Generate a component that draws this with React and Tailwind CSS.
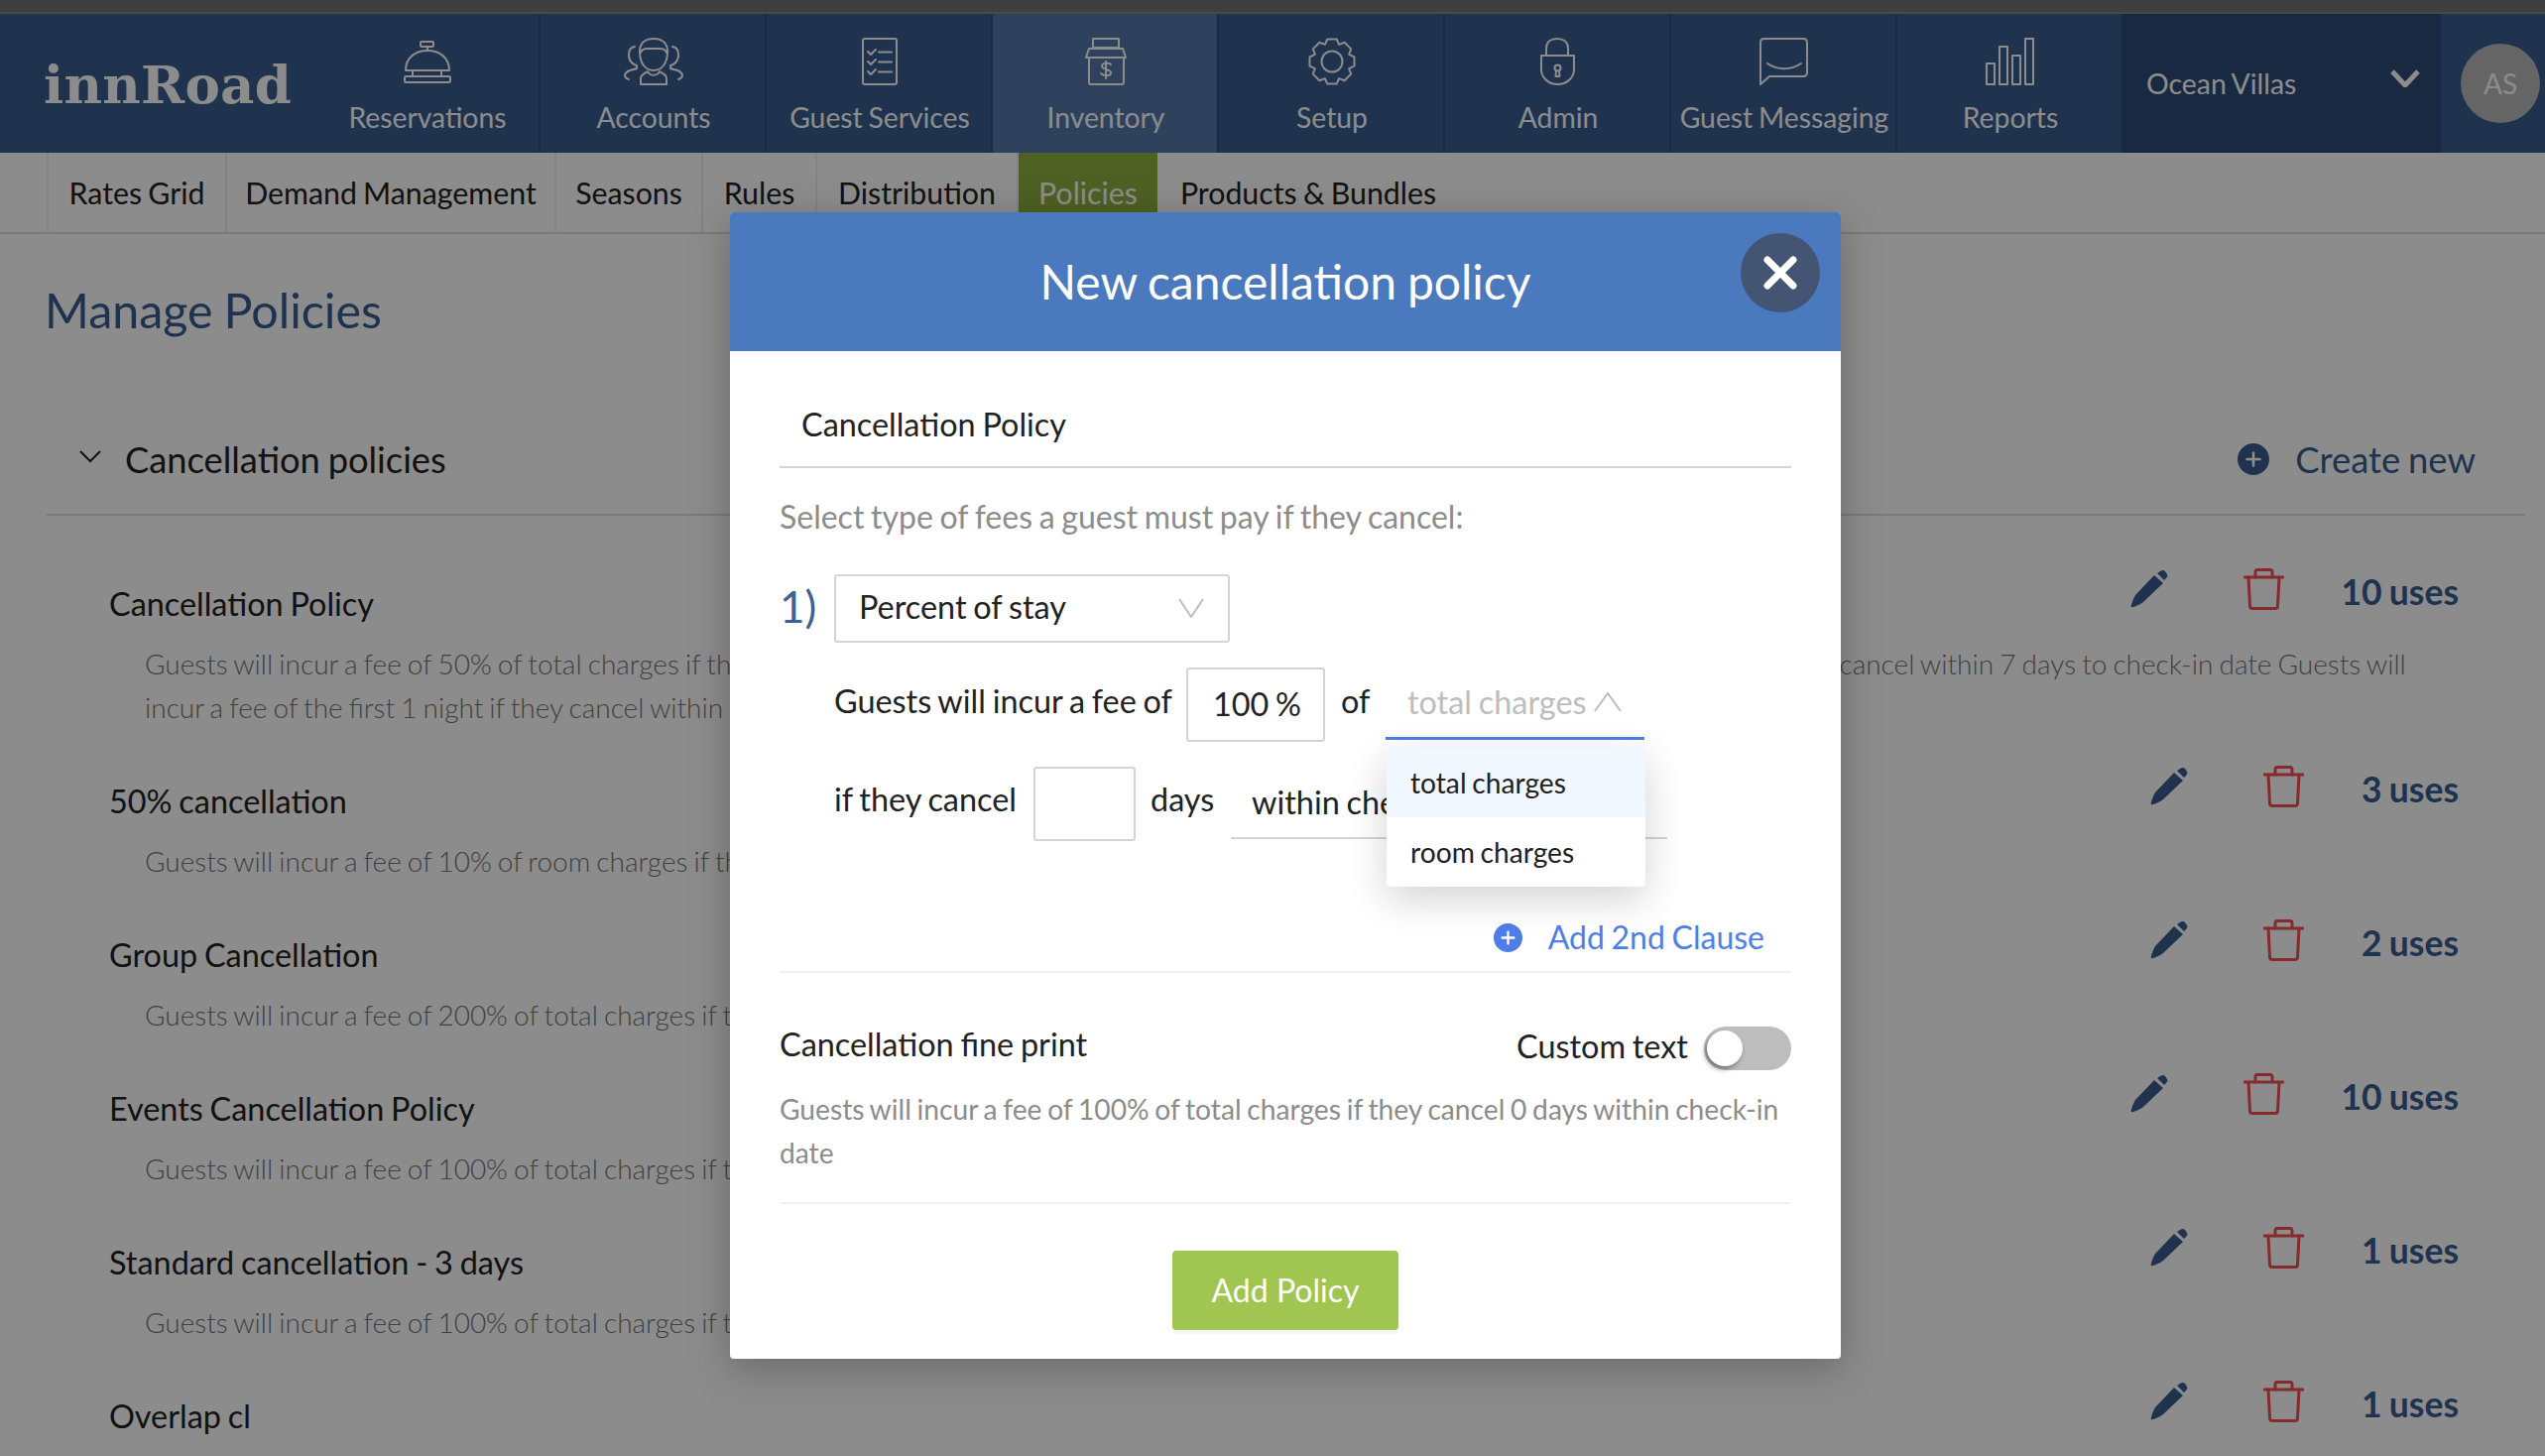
const navStroke = { fill: 'none', stroke: 'currentColor', strokeWidth: 2, strokeLinejoin: 'round', strokeLinecap: 'round' }

function gearPath() {
  const pts = []
  for (let i = 0; i < 8; i++) {
    const a = (i * Math.PI) / 4 - Math.PI / 2
    const step = Math.PI / 4
    const list = [[18.5, -0.5], [23, -0.26], [23, 0.26], [18.5, 0.5]]
    list.forEach(([r, k]) => {
      const t = a + k * step
      pts.push(`${(24 + r * Math.cos(t)).toFixed(1)} ${(24 + r * Math.sin(t)).toFixed(1)}`)
    })
  }
  return 'M' + pts.join(' L') + ' Z'
}

const BellIcon = () => (
  <svg width="48" height="48" viewBox="0 0 48 48" {...navStroke}>
    <rect x="17" y="4" width="13" height="5" rx="1" />
    <path d="M24 9V13" />
    <path d="M2 33C2 20 12 13 24 13C36 13 46 20 46 33Z" />
    <path d="M9 33V39M38 33V39" />
    <rect x="1" y="39" width="46" height="6" rx="1.5" />
  </svg>
)

const PeopleIcon = () => (
  <svg width="60" height="48" viewBox="0 0 60 48" {...navStroke}>
    <path d="M16 14C16 5 22 1 30 1C38 1 44 5 44 14C44 26 38 33 30 33C22 33 16 26 16 14Z" />
    <path d="M17 15C19 10 24 11 30 11C36 11 41 10 43 15" />
    <path d="M17 47V41C17 37 21 36 24 34C26 39 34 39 36 34C39 36 43 37 43 41V47Z" />
    <path d="M11 9C5 10 5 15 5 19C6 24 9 27 13 28V31C9 33 2 32 1 38C1 40 2 41 5 42" />
    <path d="M49 9C55 10 55 15 55 19C54 24 51 27 47 28V31C51 33 58 32 59 38C59 40 58 41 55 42" />
  </svg>
)

const ChecklistIcon = () => (
  <svg width="36" height="48" viewBox="0 0 36 48" {...navStroke}>
    <rect x="1" y="1" width="34" height="46" rx="2" />
    <path d="M6 14L9 17L14 12M6 24L9 27L14 22M6 34L9 37L14 32" />
    <path d="M17 14.5H30M17 24.5H30M17 34.5H30" />
  </svg>
)

const JarIcon = () => (
  <svg width="42" height="48" viewBox="0 0 42 48" {...navStroke}>
    <rect x="8" y="1" width="26" height="9" />
    <path d="M4 11H38L41 20H1Z" />
    <path d="M4 20V45Q4 47 6 47H37Q39 47 39 45V20" />
    <path d="M26 27C24 25 18 25 17 28C16 33 27 31 26 36C25 39 19 39 16 36M21 24V41" />
  </svg>
)

const GearIcon = () => (
  <svg width="48" height="48" viewBox="0 0 48 48" {...navStroke}>
    <path d={gearPath()} />
    <circle cx="24" cy="24" r="10.5" />
  </svg>
)

const LockIcon = () => (
  <svg width="36" height="48" viewBox="0 0 36 48" {...navStroke}>
    <path d="M1 18H34V32C34 41 26 47 17.5 47C9 47 1 41 1 32Z" />
    <path d="M6 18V11C6 4 11 1 17 1C23 1 28 4 28 11V18" />
    <circle cx="17.5" cy="30.5" r="3" />
    <path d="M16 33.5L15.5 39H19.5L19 33.5" />
  </svg>
)

const BubbleIcon = () => (
  <svg width="50" height="48" viewBox="0 0 50 48" {...navStroke}>
    <path d="M1 47V5Q1 1 5 1H44Q48 1 48 5V35Q48 39 44 39H10Z" />
    <path d="M8 26C18 33 32 33 42 26" />
  </svg>
)

const BarsIcon = () => (
  <svg width="50" height="48" viewBox="0 0 50 48" {...navStroke}>
    <rect x="1" y="26" width="8" height="21" />
    <rect x="14" y="9" width="8" height="38" />
    <rect x="27" y="18" width="8" height="29" />
    <rect x="40" y="1" width="8" height="46" />
  </svg>
)

const PencilIcon = () => (
  <svg width="38" height="38" viewBox="0 0 38 38" fill="#3a5d91">
    <path d="M1 37C0 37 2 30 5 25L24 5L33 13L13 32C9 35 2 38 1 37Z" />
    <path d="M27 3L30 1Q33 -1 35 1L37 4Q38 6 36 8L34 10Z" />
  </svg>
)

const TrashIcon = () => (
  <svg width="41" height="42" viewBox="0 0 41 42" fill="none" stroke="#f54e52" strokeWidth="3" strokeLinejoin="round" strokeLinecap="round">
    <path d="M12 9V4Q12 1.5 14 1.5H27Q29 1.5 29 4V9" />
    <path d="M1 9H40" />
    <path d="M5 9L6.5 38Q6.5 40.5 9 40.5H32Q34.5 40.5 34.5 38L36 9" />
  </svg>
)

const PlusCircle = ({ size, color }) => (
  <svg width={size} height={size} viewBox="0 0 32 32">
    <circle cx="16" cy="16" r="16" fill={color} />
    <path d="M16 9.5V22.5M9.5 16H22.5" stroke="#fff" strokeWidth="2.6" strokeLinecap="round" />
  </svg>
)

const navItems = [
  { label: 'Reservations', icon: <BellIcon /> },
  { label: 'Accounts', icon: <PeopleIcon /> },
  { label: 'Guest Services', icon: <ChecklistIcon /> },
  { label: 'Inventory', icon: <JarIcon />, active: true },
  { label: 'Setup', icon: <GearIcon /> },
  { label: 'Admin', icon: <LockIcon /> },
  { label: 'Guest Messaging', icon: <BubbleIcon /> },
  { label: 'Reports', icon: <BarsIcon /> },
]

const subNav = [
  { label: 'Rates Grid', w: 'w-[182px]' },
  { label: 'Demand Management', w: 'w-[332px]' },
  { label: 'Seasons', w: 'w-[148px]' },
  { label: 'Rules', w: 'w-[115px]' },
  { label: 'Distribution', w: 'w-[203px]' },
  { label: 'Policies', w: 'w-[140px]', active: true },
  { label: 'Products & Bundles', w: 'w-[304px]', last: true },
]

const policies = [
  {
    name: 'Cancellation Policy',
    uses: '10 uses',
    lines: [
      'Guests will incur a fee of 50% of total charges if they cancel within 2 days to check-in date Guests will incur a fee of 100% of total charges if they cancel within 7 days to check-in date Guests will',
      'incur a fee of the first 1 night if they cancel within 1 day to check-in date',
    ],
  },
  { name: '50% cancellation', uses: '3 uses', lines: ['Guests will incur a fee of 10% of room charges if they cancel within 7 days to check-in date'] },
  { name: 'Group Cancellation', uses: '2 uses', lines: ['Guests will incur a fee of 200% of total charges if they cancel within 30 days to check-in date'] },
  { name: 'Events Cancellation Policy', uses: '10 uses', lines: ['Guests will incur a fee of 100% of total charges if they cancel within 14 days to check-in date'] },
  { name: 'Standard cancellation - 3 days', uses: '1 uses', lines: ['Guests will incur a fee of 100% of total charges if they cancel within 3 days to check-in date'] },
  { name: 'Overlap cl', uses: '1 uses', lines: ['Guests will incur a fee of 100% of total charges if they cancel within 1 day to check-in date'] },
]

export default function App() {
  return (
    <div className="relative w-[2566px] h-[1468px] overflow-hidden bg-white [font-family:Lato,sans-serif] [word-spacing:-1.5px]">
      <div className="h-[14px] bg-[#737373] border-b-2 border-[#868686]" />

      {/* top nav */}
      <div className="flex h-[140px] bg-[#3a5d91] text-white">
        <div className="w-[317px] pl-[44px] pt-[36px] text-[53px] leading-[70px] font-bold [font-family:'DejaVu_Serif',serif] tracking-[0.3px]">
          innRoad
        </div>
        {navItems.map((item) => (
          <div
            key={item.label}
            className={`w-[228px] flex flex-col items-center pt-[24px] pl-[2px] border-r-2 border-[#30507f] ${item.active ? 'bg-[#5578ab]' : ''}`}
          >
            <div className="h-[48px]">{item.icon}</div>
            <span className="text-[28.3px] leading-[44px] mt-[10px] whitespace-nowrap">{item.label}</span>
          </div>
        ))}
        <div className="w-[322px] -ml-[2px] bg-[#314c78] flex pl-[25px] pr-[13px] items-center justify-between">
          <span className="text-[28.4px]">Ocean Villas</span>
          <svg width="30" height="18" viewBox="0 0 30 18" fill="none" stroke="currentColor" strokeWidth="5" className="-mt-[10px] mr-[8px]">
            <path d="M2 2L15 16L28 2" />
          </svg>
        </div>
        <div className="flex-1 flex items-center pl-[20px]">
          <div className="w-[80px] h-[80px] rounded-full bg-[#b9b9b9] flex items-center justify-center text-[28px] text-white">
            AS
          </div>
        </div>
      </div>

      {/* sub nav */}
      <div className="flex h-[82px] pl-[47px] border-b-2 border-[#dcdcdc] text-[#222]">
        {subNav.map((item) => (
          <div
            key={item.label}
            className={`${item.w} flex justify-center pt-[20px] text-[30.3px] leading-[40px] whitespace-nowrap ${item.last || item.active ? '' : 'border-r-2 border-[#eeeeee]'} ${item.label === 'Rates Grid' ? 'border-l-2' : ''} ${item.active ? 'bg-[#8fb03e] text-white' : ''}`}
          >
            {item.label}
          </div>
        ))}
      </div>

      <div className="pl-[45px] pr-[20px]">
        <h1 className="mt-[48px] text-[48.4px] leading-[56px] text-[#3a5d91]">Manage Policies</h1>

        <div className="ml-[2px] mt-[95px] pb-[27px] border-b-2 border-[#dcdcdc] flex justify-between items-center">
          <div className="flex items-center text-[36.3px] leading-[56px] text-[#222]">
            <svg width="24" height="14" viewBox="0 0 24 14" fill="none" stroke="currentColor" strokeWidth="2" className="ml-[32px] mr-[23px] -mt-[6px]">
              <path d="M2 2L12 12L22 2" />
            </svg>
            Cancellation policies
          </div>
          <div className="flex items-center gap-[26px] pr-[50px] text-[36.4px] leading-[56px] text-[#3a5d91]">
            <PlusCircle size={32} color="#3a5d91" />
            Create new
          </div>
        </div>

        <div className="mt-[67px] pl-[65px] pr-[67px] flex flex-col gap-[51px]">
          {policies.map((p) => (
            <div key={p.name}>
              <div className="flex justify-between items-start">
                <div className="text-[32.4px] leading-[44px] text-[#222]">{p.name}</div>
                <div className="-mt-[12px] h-[44px] flex items-center">
                  <div className="-mt-[6px]"><PencilIcon /></div>
                  <div className="ml-[76px] mr-[58px] -mt-[6px]"><TrashIcon /></div>
                  <span className="text-[35.5px] font-bold text-[#3a5d91] leading-[44px]">{p.uses}</span>
                </div>
              </div>
              <div className="mt-[16px] pl-[36px] text-[28px] leading-[44px] font-light text-[#757575] whitespace-nowrap">
                {p.lines.map((line) => (
                  <div key={line}>{line}</div>
                ))}
              </div>
            </div>
          ))}
        </div>
      </div>

      {/* dimmed backdrop + modal */}
      <div className="absolute inset-0 bg-black/45">
        <div className="absolute left-[736px] top-[214px] w-[1120px] bg-white rounded-[4px] shadow-[0_10px_40px_rgba(0,0,0,0.25)]">
          <div className="relative h-[140px] bg-[#4a79bd] rounded-t-[4px] flex items-center justify-center text-white text-[48px]">
            New cancellation policy
            <button className="absolute left-[1019px] top-[21px] w-[80px] h-[80px] rounded-full bg-[#445473] flex items-center justify-center">
              <svg width="34" height="34" viewBox="0 0 34 34" fill="none" stroke="#fff" strokeWidth="7" strokeLinecap="round">
                <path d="M4 4L30 30M30 4L4 30" />
              </svg>
            </button>
          </div>

          <div className="px-[50px] pb-[29px]">
            <div className="pt-[52px] pb-[20px] pl-[22px] border-b-2 border-[#d4d4d4] text-[32.4px] leading-[44px] text-[#222]">
              Cancellation Policy
            </div>
            <div className="mt-[27px] text-[32px] leading-[44px] text-[#8c8c8c]">Select type of fees a guest must pay if they cancel:</div>

            <div className="mt-[36px] flex items-center">
              <span className="w-[55px] mb-[6px] text-[44px] leading-[56px] text-[#3e6196]">1)</span>
              <div className="w-[399px] h-[69px] border-2 border-[#d4d4d4] rounded-[3px] pl-[23px] pb-[2px] pr-[24px] flex items-center justify-between text-[32.4px] text-[#222]">
                Percent of stay
                <svg width="26" height="20" viewBox="0 0 26 20" fill="none" stroke="#bdbdbd" strokeWidth="2">
                  <path d="M1 1L13 19L25 1" />
                </svg>
              </div>
            </div>

            <div className="mt-[25px] flex pl-[55px] text-[32.4px] text-[#222] leading-[44px]">
              <span className="w-[355px] h-[75px] flex items-center pb-[7px] whitespace-nowrap">Guests will incur a fee of</span>
              <div className="w-[140px] h-[75px] border-2 border-[#d4d4d4] rounded-[3px] flex items-center justify-center pl-[3px] pb-[2px]">100 %</div>
              <span className="w-[61px] pl-[16px] h-[75px] flex items-center pb-[7px]">of</span>
              <div className="relative w-[261px] h-[73px] border-b-[3px] border-[#4f7ee8] pl-[22px] flex items-center text-[#bdbdbd]">
                total charges
                <svg width="28" height="20" viewBox="0 0 28 20" fill="none" stroke="#bdbdbd" strokeWidth="2" className="ml-[7px]">
                  <path d="M1 19L14 1L27 19" />
                </svg>
                <div className="absolute z-10 left-[1px] top-[81px] w-[261px] bg-white rounded-[4px] shadow-[0_12px_40px_rgba(0,0,0,0.18)] text-[28.2px] text-[#222]">
                  <div className="h-[70px] pl-[24px] flex items-center bg-[#f0f7ff] rounded-t-[4px]">total charges</div>
                  <div className="h-[70px] pl-[24px] flex items-center">room charges</div>
                </div>
              </div>
            </div>

            <div className="mt-[25px] flex pl-[55px] text-[32.4px] text-[#222] leading-[44px]">
              <span className="w-[201px] h-[75px] flex items-center pb-[9px] whitespace-nowrap">if they cancel</span>
              <div className="w-[103px] h-[75px] border-2 border-[#d4d4d4] rounded-[3px]" />
              <span className="w-[96px] pl-[15px] h-[75px] flex items-center pb-[9px]">days</span>
              <div className="w-[440px] h-[73px] border-b-2 border-[#d4d4d4] pl-[21px] flex items-center whitespace-nowrap">within check-in date</div>
            </div>

            <div className="mt-[75px] pr-[27px] flex justify-end items-center text-[32px] leading-[44px] text-[#4f7ee8]">
              <PlusCircle size={29} color="#4f7ee8" />
              <span className="ml-[26px]">Add 2nd Clause</span>
            </div>
            <div className="mt-[12px] border-b-2 border-[#f1f1f1]" />

            <div className="mt-[50px] flex justify-between items-center text-[32.4px] leading-[44px] text-[#222]">
              <span className="pb-[8px]">Cancellation fine print</span>
              <div className="flex items-center">
                <span className="mr-[16px] pb-[4px]">Custom text</span>
                <div className="w-[88px] h-[44px] rounded-full bg-[#bdbdbd] flex items-center pl-[3px]">
                  <div className="w-[36px] h-[36px] rounded-full bg-white shadow-[-2px_3px_5px_rgba(0,0,0,0.4)]" />
                </div>
              </div>
            </div>
            <p className="mt-[13px] text-[28.2px] leading-[44px] text-[#8c8c8c]">
              Guests will incur a fee of 100% of total charges if they cancel 0 days within check-in date
            </p>
            <div className="mt-[28px] border-b-2 border-[#f1f1f1]" />

            <div className="mt-[47px] flex justify-center">
              <button className="w-[228px] h-[80px] bg-[#a0c550] rounded-[4px] text-white text-[32px] shadow-[0_4px_0_#f5f7ff]">Add Policy</button>
            </div>
          </div>
        </div>
      </div>
    </div>
  )
}
